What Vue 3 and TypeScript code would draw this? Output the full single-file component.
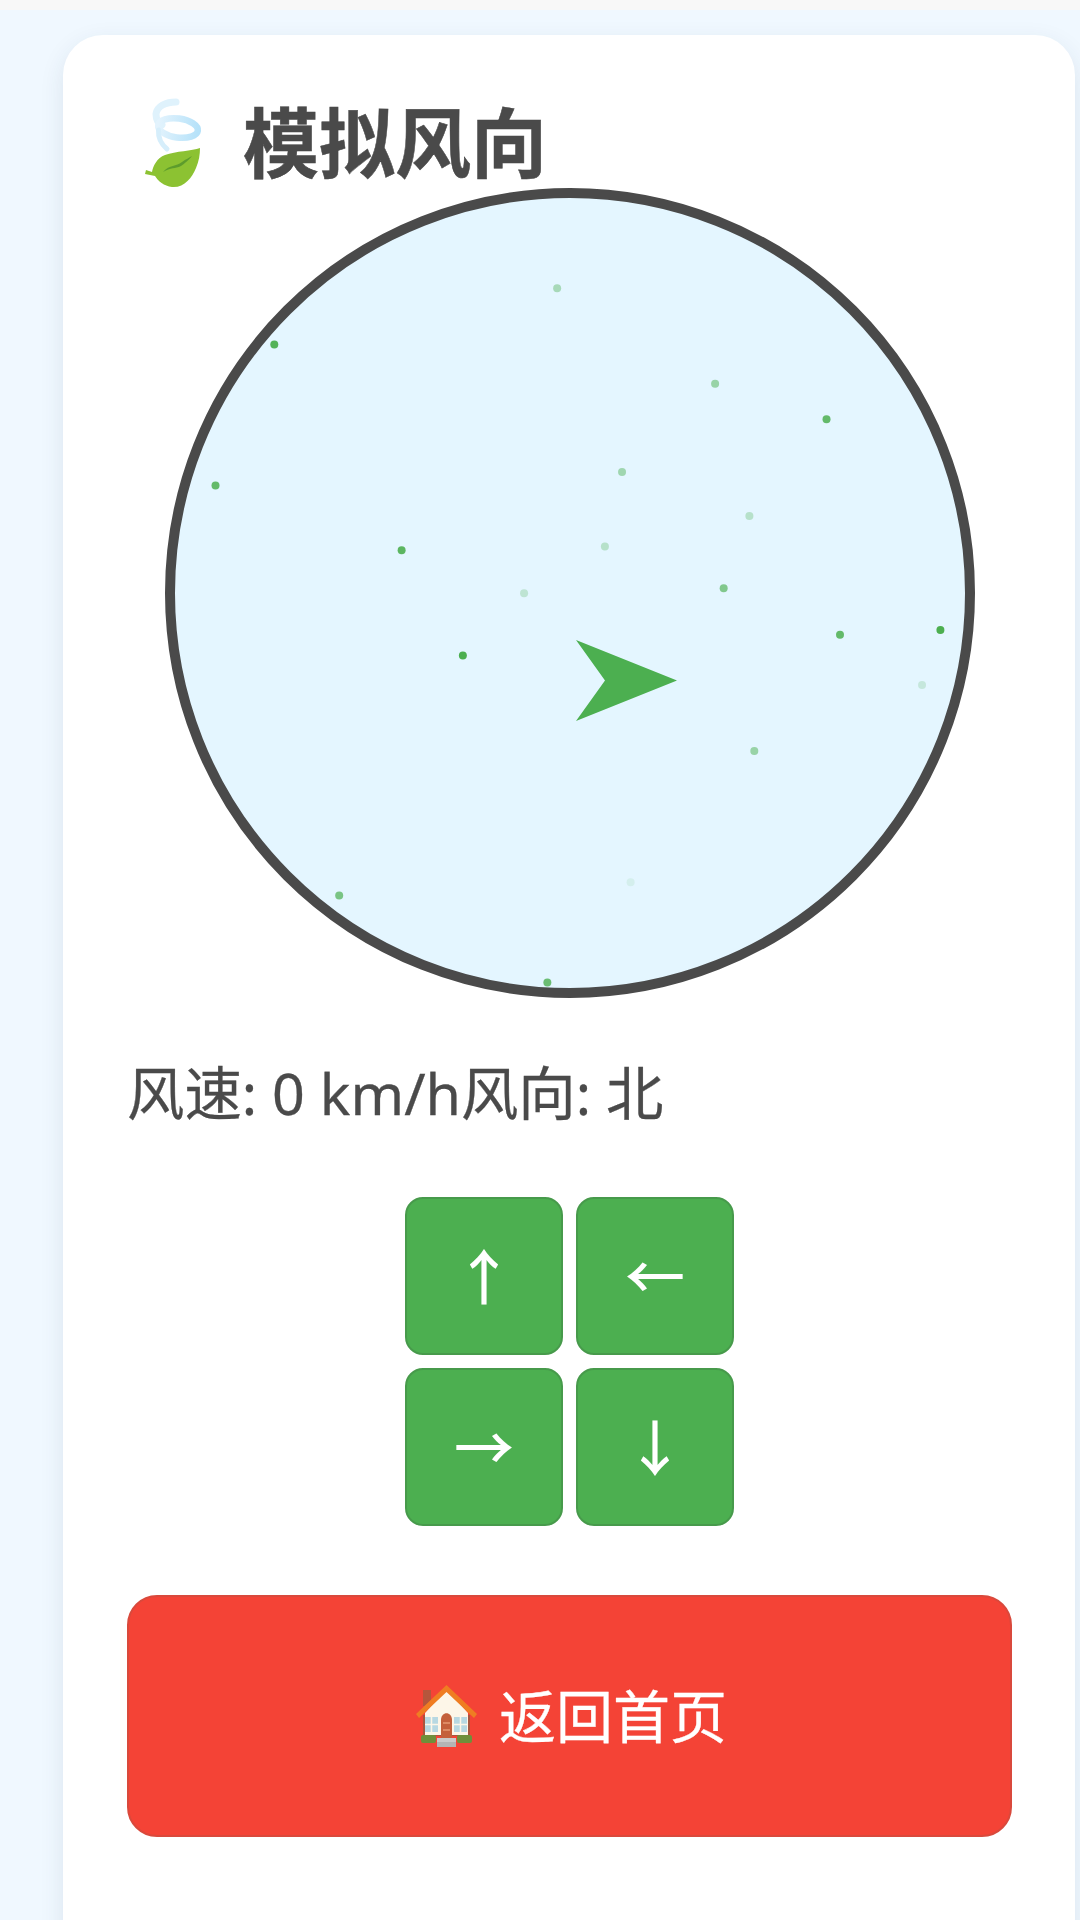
<script setup lang="ts">
interface Dot { x: number; y: number; o: number }
// display coordinates from the reference, converted to the dial's own 810px box
const k = 1080 / 882
const raw: [number, number, number][] = [
  [455, 235, 0.4], [224, 281, 0.95], [584, 313, 0.5], [675, 342, 0.85], [508, 385, 0.45],
  [176, 396, 0.85], [612, 421, 0.3], [494, 446, 0.3], [328, 449, 0.9], [428, 484, 0.25],
  [591, 480, 0.65], [378, 535, 1], [686, 518, 0.85], [768, 514, 1], [753, 559, 0.2],
  [616, 613, 0.5], [515, 720, 0.1], [277, 731, 0.7], [447, 802, 0.8]
]
const dots: Dot[] = raw.map(([x, y, o]) => ({ x: x * k - 165, y: y * k - 187.5, o }))
const arrows: string[] = ['↑', '←', '→', '↓']
</script>

<template>
  <div class="screen">
    <div class="topbar"></div>
    <div class="page">
      <main class="card">
        <h1 class="title">
          <svg class="leaf" viewBox="0 0 70 94" width="70" height="94" aria-hidden="true">
            <defs>
              <linearGradient id="ring" x1="0" x2="1" y1="0" y2="0">
                <stop offset="0" stop-color="#e3f3fd" />
                <stop offset="1" stop-color="#b6e2f9" />
              </linearGradient>
            </defs>
            <path d="M36 6 C26 6 17 10 16 18 C16 24 18 27 22 29" fill="none" stroke="#dff2fc" stroke-width="7" stroke-linecap="round" />
            <ellipse cx="38" cy="32" rx="20" ry="9.500" transform="rotate(8 38 32)" fill="none" stroke="url(#ring)" stroke-width="6.500" />
            <path d="M18.500 34 C18 42 21 48 27 53" fill="none" stroke="#d6eefb" stroke-width="5" stroke-linecap="round" />
            <path d="M60 52 C52 55 36 55 25 59 C17 62 13 70 12 76 L6 74 L5 78 L15 80 C18 85 24 90 32 91 C44 92 52 82 56 72 C59 65 60 58 60 52 Z" fill="#8cc232" />
            <path d="M23 76 C30 68 36 71 42 66 C46 63 49 62 52 60 C48 65 45 67 41 70 C35 73 31 71 23 76 Z" fill="#5d9c2c" />
          </svg>
          <span>模拟风向</span>
        </h1>

        <svg class="dial" viewBox="0 0 810 810" width="810" height="810" aria-hidden="true">
          <circle cx="405" cy="405" r="400" fill="#e4f6ff" stroke="#4a4a4a" stroke-width="10" />
          <circle v-for="(d, i) in dots" :key="i" :cx="d.x" :cy="d.y" r="4" fill="#4caf50" :opacity="d.o" />
          <polygon points="512,492.500 411,452 440,492.500 411,533" fill="#4caf50" />
        </svg>

        <p class="readout"><span>风速: 0 km/h</span><span>风向: 北</span></p>

        <div class="pad">
          <button v-for="a in arrows" :key="a" class="key" type="button">{{ a }}</button>
        </div>

        <button class="home" type="button">
          <svg class="house" viewBox="0 0 62 62" width="62" height="62" aria-hidden="true">
            <rect x="7" y="5" width="8" height="16" fill="#b5563c" />
            <rect x="7" y="30" width="47" height="21" fill="#a9563f" />
            <path d="M30.500 4 L52 28 V50 H9 V28 Z" fill="#fdf6e8" />
            <path d="M30.500 0 L61 29 L58 33 L30.500 7 L3 33 L0 29 Z" fill="#ef7d22" />
            <rect x="9" y="32" width="13" height="15" fill="#b7d8e2" />
            <rect x="38" y="32" width="13" height="15" fill="#b7d8e2" />
            <path d="M15.500 32 V47 M9 39.500 H22 M44.500 32 V47 M38 39.500 H51" stroke="#fdf6e8" stroke-width="1.500" />
            <rect x="5" y="50" width="15" height="8" rx="2" fill="#6f8f3a" />
            <rect x="41" y="50" width="15" height="8" rx="2" fill="#6f8f3a" />
            <path d="M25 53 V35 C25 26 36 26 36 35 V53 Z" fill="#c4603b" />
            <path d="M27 38 H34 M27 45 H34" stroke="#dd8a63" stroke-width="2" />
            <rect x="21" y="53" width="19" height="4.500" fill="#cacaca" />
            <rect x="21" y="57" width="19" height="5" fill="#b4b4b4" />
          </svg>
          <span class="home-label">返回首页</span>
        </button>
      </main>
    </div>
  </div>
</template>

<style>
html, body { margin: 0; background: #f0f8ff; }
</style>

<style scoped>
.screen {
  width: 1080px;
  height: 1920px;
  overflow: hidden;
  background: #f0f8ff;
  font-family: "Noto Sans", "Noto Sans CJK SC", sans-serif;
  color: #4a4a4a;
}
.topbar { height: 10px; background: #f8f8f8; }
.page { padding: 25px 5px 0 63px; }
.card {
  box-sizing: border-box;
  height: 1960px;
  padding: 62px 63px 0 64px;
  background: #fff;
  border-radius: 40px;
  box-shadow: 0 8px 24px rgba(40, 60, 90, 0.1);
  display: flex;
  flex-direction: column;
  align-items: center;
}
.title {
  align-self: stretch;
  margin: 0 0 0 13px;
  height: 91px;
  display: flex;
  align-items: center;
  gap: 33px;
  font-size: 76px;
  font-weight: 700;
  line-height: 91px;
  -webkit-text-stroke: 0.5px #4a4a4a;
}
.leaf { flex: none; }
.dial { display: block; flex: none; }
.readout {
  align-self: stretch;
  margin: 55px 0 0;
  font-size: 57.4px;
  line-height: 80px;
  white-space: nowrap;
  -webkit-text-stroke: 0.3px #4a4a4a;
}
.pad {
  margin-top: 64px;
  display: grid;
  grid-template-columns: 158px 158px;
  grid-auto-rows: 158px;
  gap: 13px;
}
.key {
  padding: 0 0 5px;
  border: 2px solid #479a4b;
  border-radius: 18px;
  background: #4caf50;
  color: #fff;
  font-family: "Noto Sans CJK SC", sans-serif;
  font-size: 60px;
  font-weight: 500;
  line-height: 1;
}
.home {
  margin-top: 69px;
  align-self: stretch;
  height: 242px;
  flex: none;
  padding: 0 0 0 4px;
  border: 2px solid #d9493c;
  border-radius: 30px;
  background: #f44336;
  color: #fff;
  font: inherit;
  font-size: 57px;
  display: flex;
  align-items: center;
  justify-content: center;
  gap: 21px;
}
.house { flex: none; }
.home-label { margin-bottom: 6px; -webkit-text-stroke: 0.3px #fff; }
</style>
